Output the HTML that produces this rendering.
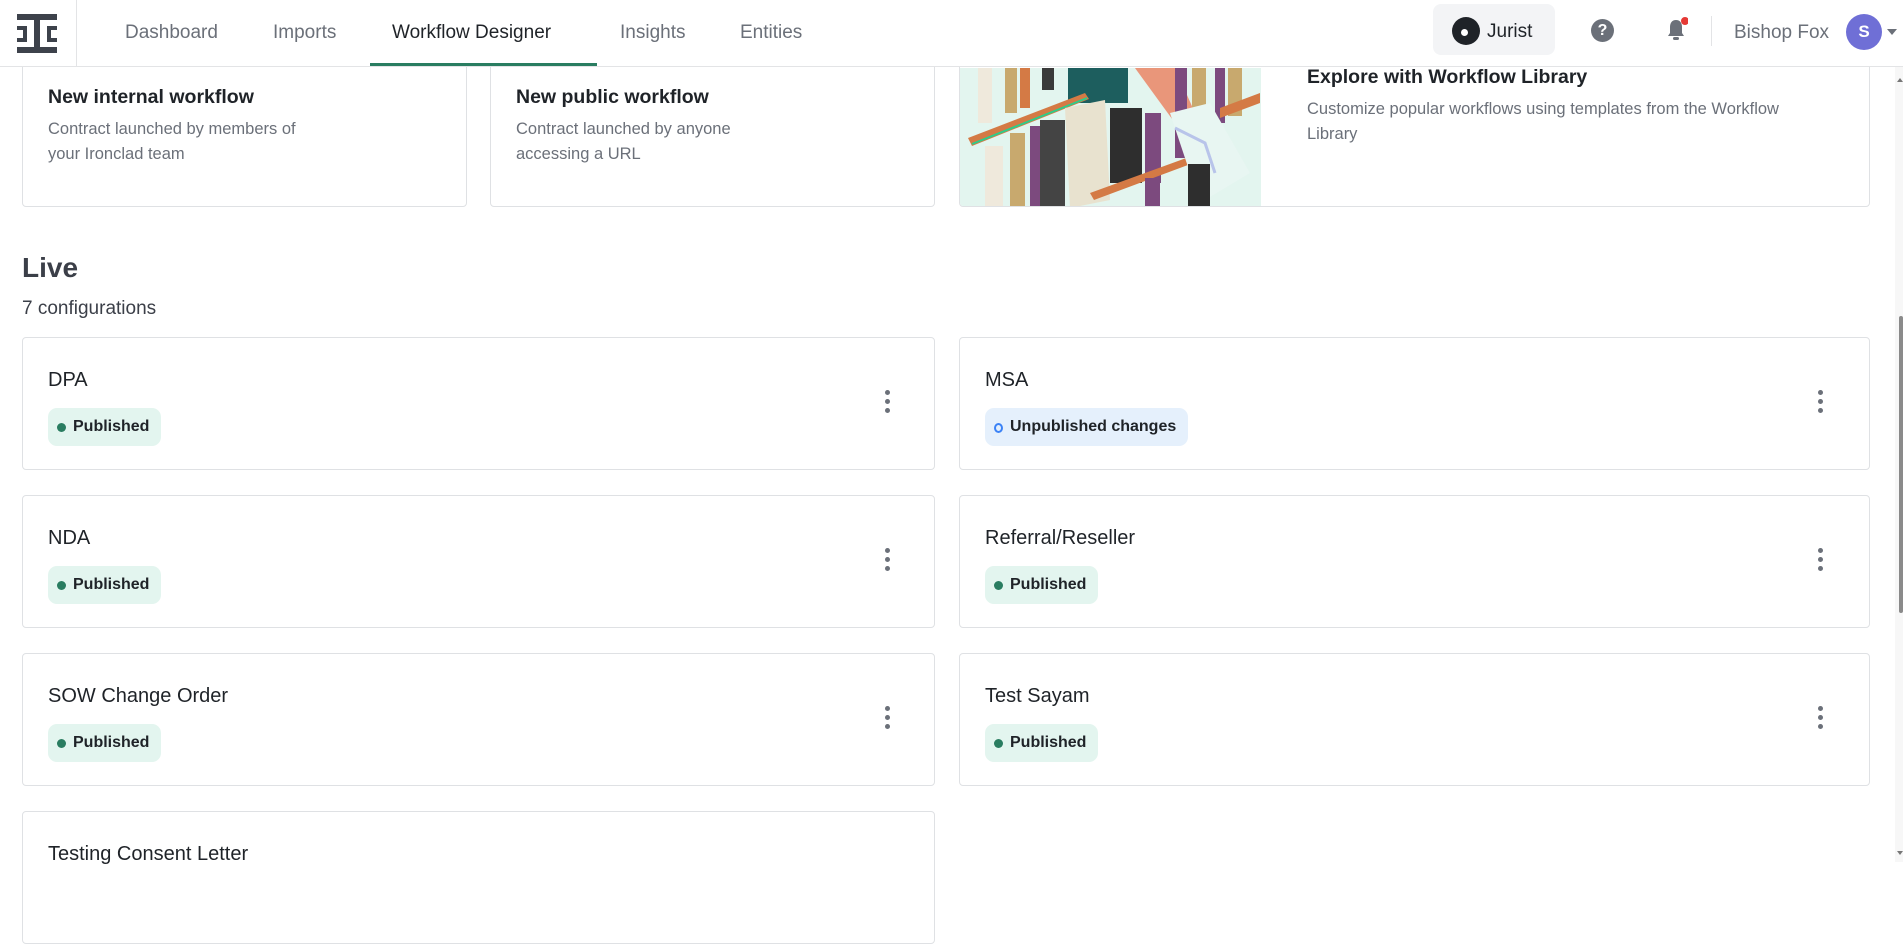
<!DOCTYPE html>
<html><head><meta charset="utf-8">
<style>
*{box-sizing:border-box;margin:0;padding:0}
body{width:1903px;height:862px;overflow:hidden;background:#fff;font-family:"Liberation Sans",sans-serif;color:#1f2328;position:relative}
.hdr{position:absolute;left:0;top:0;width:1903px;height:67px;border-bottom:1px solid #e3e4e6;background:#fff;z-index:5}
.logo{position:absolute;left:0;top:0;width:77px;height:67px;border-right:1px solid #e3e4e6}
.nav{position:absolute;top:22px;font-size:19px;color:#6b7079}
.nav.act{color:#1f2328}
.ul{position:absolute;left:370px;top:63px;width:227px;height:3px;background:#2a7d61}
.card{position:absolute;border:1px solid #dfe1e4;border-radius:4px;background:#fff}
.t{position:absolute;font-size:20px;color:#1f2328}
.d{position:absolute;font-size:16.5px;color:#6b7079;line-height:25px}
.badge{position:absolute;left:25px;top:70px;height:38px;border-radius:9px;background:#e3f5ef;font-size:16px;font-weight:bold;color:#1f2328;padding:0 12px 0 25px;line-height:38px}
.badge:before{content:"";position:absolute;left:9px;top:15px;width:9px;height:9px;border-radius:50%;background:#2a7d61}
.badge.u{background:#e5f0fc}
.badge.u:before{background:none;border:2.5px solid #3b82f6;width:5px;height:6px;top:15px}
.keb{position:absolute;right:46px;top:52px;width:5px}
.keb i{display:block;width:5px;height:5px;border-radius:50%;background:#6b7079;margin-bottom:4px}
</style></head><body>
<div class="hdr">
 <div class="logo"><svg width="77" height="67" viewBox="0 0 77 67"><g fill="#3d424b"><rect x="17" y="14" width="40" height="6"/><rect x="17" y="47" width="40" height="6"/><rect x="34" y="20" width="6" height="27"/><rect x="17" y="26" width="10" height="4"/><rect x="23" y="26" width="4" height="16"/><rect x="17" y="38" width="10" height="4"/><rect x="47" y="26" width="10" height="4"/><rect x="47" y="26" width="4" height="16"/><rect x="47" y="38" width="10" height="4"/></g></svg></div>
 <div class="nav" style="left:125px">Dashboard</div>
 <div class="nav" style="left:273px">Imports</div>
 <div class="nav act" style="left:392px">Workflow Designer</div>
 <div class="nav" style="left:620px">Insights</div>
 <div class="nav" style="left:740px">Entities</div>
 <div class="ul"></div>
 <div style="position:absolute;left:1433px;top:4px;width:122px;height:51px;background:#f3f4f6;border-radius:8px">
  <div style="position:absolute;left:19px;top:13px;width:28px;height:28px;border-radius:50%;background:#1f2328"><div style="position:absolute;left:9px;top:12px;width:7px;height:7px;border-radius:50%;background:#fff"></div></div>
  <div style="position:absolute;left:54px;top:17px;font-size:19px;color:#1f2328">Jurist</div>
 </div>
 <div style="position:absolute;left:1591px;top:19px;width:23px;height:23px;border-radius:50%;background:#6b7079;color:#fff;font-weight:bold;font-size:16px;text-align:center;line-height:23px">?</div>
 <svg style="position:absolute;left:1664px;top:17px" width="24" height="28" viewBox="0 0 24 28"><path d="M12 3c-4 0-6 3-6 7v6l-2 3h16l-2-3v-6c0-4-2-7-6-7z" fill="#6b7079"/><rect x="9" y="20" width="6" height="3" rx="1.5" fill="#6b7079"/><circle cx="21" cy="4" r="4" fill="#e53935"/></svg>
 <div style="position:absolute;left:1711px;top:16px;width:1px;height:30px;background:#e3e4e6"></div>
 <div style="position:absolute;left:1734px;top:22px;font-size:19px;color:#6b7079">Bishop Fox</div>
 <div style="position:absolute;left:1846px;top:14px;width:36px;height:36px;border-radius:50%;background:#6f6fd6;color:#fff;font-size:17px;font-weight:bold;text-align:center;line-height:36px">S</div>
 <div style="position:absolute;left:1887px;top:29px;border-left:5px solid transparent;border-right:5px solid transparent;border-top:6px solid #6b7079"></div>
</div>

<div class="card" style="left:22px;top:40px;width:445px;height:167px">
 <div class="t" style="left:25px;top:45px;font-weight:bold;font-size:19.5px">New internal workflow</div>
 <div class="d" style="left:25px;top:76px">Contract launched by members of<br>your Ironclad team</div>
</div>
<div class="card" style="left:490px;top:40px;width:445px;height:167px">
 <div class="t" style="left:25px;top:45px;font-weight:bold;font-size:19.5px">New public workflow</div>
 <div class="d" style="left:25px;top:76px">Contract launched by anyone<br>accessing a URL</div>
</div>
<div class="card" style="left:959px;top:40px;width:911px;height:167px;overflow:hidden">
 <svg style="position:absolute;left:0;top:27px" width="301" height="140" viewBox="0 0 301 140">
  <rect width="301" height="140" fill="#e3f5ef"/>
  <rect x="18" y="0" width="14" height="55" fill="#efe9dc"/><rect x="45" y="0" width="12" height="45" fill="#c8a96e"/><rect x="60" y="0" width="10" height="40" fill="#d47a45"/><rect x="82" y="0" width="12" height="22" fill="#3a3a3a"/>
  <rect x="108" y="0" width="60" height="35" fill="#1d5e5e"/>
  <path d="M175 0h40l20 45l-20 10z" fill="#e9967a"/>
  <rect x="215" y="0" width="12" height="90" fill="#7c4a7e"/><rect x="232" y="0" width="14" height="85" fill="#c8a96e"/><rect x="255" y="0" width="10" height="55" fill="#7c4a7e"/><rect x="268" y="0" width="14" height="48" fill="#c8a96e"/>
  <path d="M8 70L125 25l4 6L12 78z" fill="#d47a45"/><path d="M12 76L127 30" stroke="#2ecc8a" stroke-width="2"/>
  <rect x="25" y="78" width="18" height="62" fill="#efe9dc"/><rect x="50" y="65" width="15" height="75" fill="#c8a96e"/><rect x="70" y="58" width="22" height="82" fill="#7c4a7e"/><rect x="80" y="52" width="25" height="88" fill="#444"/>
  <path d="M105 40l40-8l5 100l-40 8z" fill="#e8e2cf"/>
  <rect x="150" y="40" width="32" height="75" fill="#2e2e2e"/><rect x="185" y="45" width="16" height="70" fill="#7c4a7e"/>
  <path d="M130 125L240 85l4 6L134 132z" fill="#d47a45"/>
  <path d="M210 45l40-10l40 70l-50 30z" fill="#e8f6f2"/><path d="M215 60l30 15l10 30" stroke="#b8c4ea" stroke-width="3" fill="none"/>
  <rect x="228" y="96" width="22" height="44" fill="#2e2e2e"/><rect x="185" y="110" width="15" height="30" fill="#7c4a7e"/>
  <path d="M260 40l40-15v10l-40 15z" fill="#d47a45"/>
 </svg>
 <div class="t" style="left:347px;top:25px;font-weight:bold;font-size:19.5px">Explore with Workflow Library</div>
 <div class="d" style="left:347px;top:56px">Customize popular workflows using templates from the Workflow<br>Library</div>
</div>
<div style="position:absolute;left:0;top:40px;width:1890px;height:27px;background:#fff;z-index:2"></div>

<div style="position:absolute;left:22px;top:252px;font-size:28px;font-weight:bold;color:#3b3f48">Live</div>
<div style="position:absolute;left:22px;top:298px;font-size:19px;color:#3b3f48">7 configurations</div>

<div class="card" style="left:22px;top:337px;width:913px;height:133px"><div class="t" style="left:25px;top:31px">DPA</div><div class="badge">Published</div><div class="keb" style="right:44px"><i></i><i></i><i></i></div></div>
<div class="card" style="left:959px;top:337px;width:911px;height:133px"><div class="t" style="left:25px;top:31px">MSA</div><div class="badge u">Unpublished changes</div><div class="keb"><i></i><i></i><i></i></div></div>
<div class="card" style="left:22px;top:495px;width:913px;height:133px"><div class="t" style="left:25px;top:31px">NDA</div><div class="badge">Published</div><div class="keb" style="right:44px"><i></i><i></i><i></i></div></div>
<div class="card" style="left:959px;top:495px;width:911px;height:133px"><div class="t" style="left:25px;top:31px">Referral/Reseller</div><div class="badge">Published</div><div class="keb"><i></i><i></i><i></i></div></div>
<div class="card" style="left:22px;top:653px;width:913px;height:133px"><div class="t" style="left:25px;top:31px">SOW Change Order</div><div class="badge">Published</div><div class="keb" style="right:44px"><i></i><i></i><i></i></div></div>
<div class="card" style="left:959px;top:653px;width:911px;height:133px"><div class="t" style="left:25px;top:31px">Test Sayam</div><div class="badge">Published</div><div class="keb"><i></i><i></i><i></i></div></div>
<div class="card" style="left:22px;top:811px;width:913px;height:133px"><div class="t" style="left:25px;top:31px">Testing Consent Letter</div></div>

<div style="position:absolute;left:1895px;top:67px;width:8px;height:795px;background:#f7f7f7;z-index:6">
 <div style="position:absolute;left:2px;top:11px;border-left:3px solid transparent;border-right:3px solid transparent;border-bottom:4px solid #777"></div>
 <div style="position:absolute;left:4px;top:249px;width:4px;height:297px;background:#8a8a8a;border-radius:2px"></div>
 <div style="position:absolute;left:2px;top:784px;border-left:3px solid transparent;border-right:3px solid transparent;border-top:4px solid #777"></div>
</div>
</body></html>
